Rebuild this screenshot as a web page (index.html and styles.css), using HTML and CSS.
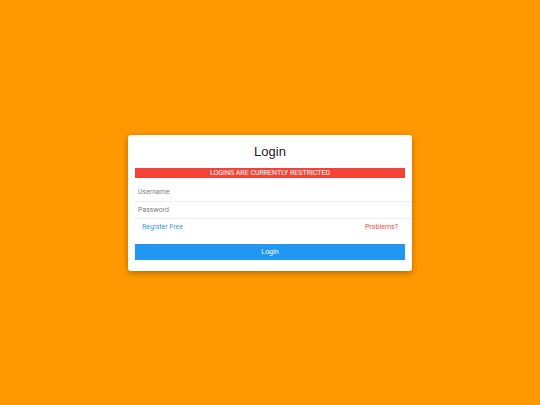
FILE: index.html
```
<!DOCTYPE html>
<html>
<head>
<meta charset="utf-8">
<link rel="stylesheet" href="styles.css">
</head>
<body>
<div class="page">
  <div class="card">
    <h1 class="title">Login</h1>
    <div class="alert">LOGINS ARE CURRENTLY RESTRICTED</div>
    <div class="fields">
      <input class="field first" type="text" placeholder="Username">
      <input class="field" type="password" placeholder="Password">
    </div>
    <div class="links">
      <a class="link register" href="#">Register Free</a>
      <a class="link problems" href="#">Problems?</a>
    </div>
    <button class="btn">Login</button>
  </div>
</div>
</body>
</html>
```
FILE: styles.css
```
html, body {
  margin: 0;
  padding: 0;
  height: 100%;
}
body {
  background: #ff9800;
  font-family: Roboto, "Liberation Sans", sans-serif;
}
.page {
  height: 100vh;
  display: flex;
  align-items: center;
  justify-content: center;
}
.card {
  width: 270px;
  background: #fff;
  border-radius: 3px;
  padding: 7px 7px 11px;
  box-shadow: 0 2px 6px rgba(0,0,0,0.3);
  display: flex;
  flex-direction: column;
}
.title {
  margin: 0 0 6px;
  font-family: "Liberation Sans", Arial, sans-serif;
  font-weight: normal;
  font-size: 13px;
  line-height: 20px;
  text-align: center;
  color: #222;
}
.alert {
  height: 10px;
  line-height: 10px;
  background: #f44336;
  color: #fff;
  font-size: 7px;
  text-align: center;
}
.fields {
  margin: 5px -7px 0 0;
  display: flex;
  flex-direction: column;
}
.field {
  display: block;
  border: none;
  border-bottom: 1px solid #eee;
  outline: none;
  padding: 0 0 0 3px;
  margin: 0;
  font-family: Roboto, "Liberation Sans", sans-serif;
  font-size: 7px;
  height: 16px;
  background: #fff;
  color: #555;
}
.field.first {
  height: 18px;
}
.field::placeholder {
  color: #808080;
  opacity: 1;
}
.links {
  display: flex;
  justify-content: space-between;
  padding: 0 7px;
  height: 16px;
  align-items: center;
  margin-bottom: 9px;
}
.link {
  font-size: 7px;
  text-decoration: none;
}
.register {
  color: #3498db;
}
.problems {
  color: #e74c3c;
}
.btn {
  display: block;
  width: 100%;
  height: 16px;
  border: none;
  padding: 0;
  background: #2196f3;
  color: #fff;
  font-family: Roboto, "Liberation Sans", sans-serif;
  font-size: 7px;
}
```
